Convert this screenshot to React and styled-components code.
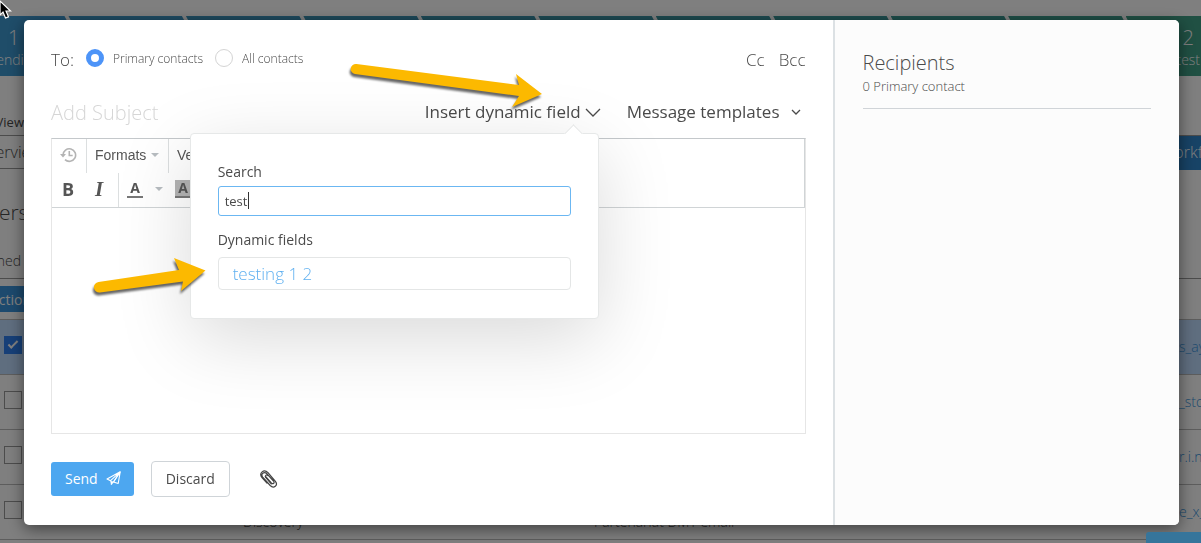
import React, { useState } from 'react';
import styled, { createGlobalStyle } from 'styled-components';

const GlobalStyle = createGlobalStyle`
  *, *::before, *::after {
    box-sizing: border-box;
  }

  body {
    margin: 0;
    overflow: hidden;
    background: #fff;
    color: #4a4a4a;
    font-family: 'Open Sans', 'Noto Sans', sans-serif;
    font-size: 14px;
  }

  button, input, textarea {
    font: inherit;
    color: inherit;
  }

  button {
    padding: 0;
    border: 0;
    background: none;
    cursor: pointer;
  }
`

/* ---------- page behind the dialog ---------- */

const Page = styled.div`
  height: 100vh;
  overflow: hidden;
  padding-top: 16px;
`

const Pipeline = styled.ol`
  display: grid;
  grid-template-columns: repeat(11, 1fr);
  margin: 0 -42px 0 -49px;
  padding: 0;
  list-style: none;
`

const Stage = styled.li`
  display: flex;
  flex-direction: column;
  align-items: center;
  height: 60px;
  margin-right: -12px;
  padding: 9px 4px 0 0;
  background: ${props => props.$color};
  clip-path: polygon(0 0, calc(100% - 16px) 0, 100% 50%, calc(100% - 16px) 100%, 0 100%, 16px 50%);
  color: #fff;
  font-weight: 300;
  line-height: 18px;
`

const StageCount = styled.span`
  font-size: 20px;
  line-height: 26px;
`

const Content = styled.div`
  margin-left: -26px;
`

const ViewLabel = styled.div`
  height: 60px;
  padding-top: 37px;
  border-bottom: 1px solid #999;
  font-size: 13px;
  line-height: 18px;
`

const Tabs = styled.div`
  display: flex;
  justify-content: space-between;
  align-items: center;
  height: 33px;
  padding-left: 2px;
  border-bottom: 1px solid #999;
  font-size: 16px;
  font-weight: 300;
`

const Workflow = styled.button`
  align-self: flex-start;
  height: 34px;
  margin-right: -46px;
  padding: 0 20px 2px;
  background: #2f86cc;
  color: #fff;
  font-size: 16px;
`

const ListTitle = styled.h2`
  margin: 0;
  padding: 25px 0 31px;
  font-size: 21px;
  font-weight: 300;
  line-height: 36px;
`

const ColumnHead = styled.div`
  height: 18px;
  padding-left: 2px;
  line-height: 0;
  border-bottom: 1px solid #999;
  font-weight: 300;
`

const Actions = styled.div`
  height: 41px;
  padding-top: 7px;
  border-bottom: 1px solid #bbb;
`

const ActionButton = styled.button`
  height: 26px;
  padding: 0 16px;
  background: #3a94dc;
  color: #fff;
`

const Row = styled.div`
  display: grid;
  grid-template-columns: 239px 351px 1fr auto;
  align-items: center;
  height: 55px;
  margin-right: -60px;
  padding: 0 0 2px 30px;
  border-bottom: 1px solid #bbb;
  background: ${props => props.$selected ? '#bfdcff' : 'transparent'};
`

const RowCheck = styled.input`
  appearance: none;
  display: grid;
  place-items: center;
  width: 18px;
  height: 18px;
  margin: 0 0 2px;
  border: 1px solid #999;

  &:checked {
    border-color: #2d7ff0;
    background: #2d7ff0;
  }

  &:checked::after {
    content: '';
    width: 10px;
    height: 5px;
    margin-bottom: 3px;
    border: solid #fff;
    border-width: 0 0 2px 2px;
    transform: rotate(-45deg);
  }
`

const RowText = styled.span`
  align-self: end;
  padding-bottom: 6px;
  font-weight: 300;
  line-height: 18px;
`

const RowLink = styled.a`
  width: 82px;
  color: #3a94dc;
  text-decoration: none;
  font-weight: 300;
`

const ChatTab = styled.div`
  position: fixed;
  z-index: 1;
  right: 0;
  bottom: 0;
  width: 55px;
  height: 11px;
  border-radius: 3px 0 0 0;
  background: #36759b;
`

/* ---------- dialog ---------- */

const Overlay = styled.div`
  position: fixed;
  inset: 0;
  display: flex;
  padding: 20px 22px 18px 24px;
  background: rgba(0, 0, 0, .5);
`

const Dialog = styled.div`
  display: flex;
  flex: 1;
  border-radius: 5px;
  background: #fff;
  box-shadow: 0 4px 16px rgba(0, 0, 0, .5);
`

const Compose = styled.form`
  display: flex;
  flex: 1;
  flex-direction: column;
  min-width: 0;
  padding: 26px 27px 28px;
`

const Sidebar = styled.aside`
  width: 30%;
  padding: 28px;
  border-left: 2px solid #dce1e4;
  border-radius: 0 5px 5px 0;
  background: #fcfcfc;
`

const SidebarTitle = styled.h1`
  margin: 0;
  font-size: 20px;
  font-weight: 300;
  line-height: 29px;
`

const SidebarCount = styled.p`
  margin: 0;
  padding-bottom: 13px;
  border-bottom: 1px solid #d0d4d8;
  font-size: 13px;
  font-weight: 300;
  line-height: 18px;
`

const ToRow = styled.div`
  display: flex;
  align-items: center;
  height: 26px;
  font-size: 17px;
  font-weight: 300;
`

const RadioLabel = styled.label`
  display: flex;
  align-items: center;
  gap: 9px;
  margin: 0 0 2px 12px;
  font-size: 12px;
`

const Radio = styled.input`
  appearance: none;
  width: 18px;
  height: 18px;
  margin: 0;
  border: 1px solid #d4d4d4;
  border-radius: 50%;

  &:checked {
    border: 5px solid #4d94f8;
  }
`

const CopyButtons = styled.div`
  display: flex;
  gap: 14px;
  margin-left: auto;
`

const CopyButton = styled.button`
  font-weight: 300;
`

const SubjectRow = styled.div`
  display: flex;
  align-items: center;
  height: 30px;
  margin: 25px 0 11px;
`

const Subject = styled.input`
  flex: 1;
  min-width: 0;
  padding: 0;
  border: 0;
  outline: 0;
  background: none;
  font-size: 20px;
  font-weight: 300;

  &::placeholder {
    color: #d6d6d6;
    opacity: 1;
  }
`

const Dropdown = styled.div`
  position: relative;
  margin-left: 26px;
`

const DropdownButton = styled.button`
  display: flex;
  align-items: center;
  gap: ${props => props.$gap};
  padding-right: ${props => props.$inset || 0};
  font-size: 17px;
  line-height: 30px;
`

const Popover = styled.div`
  position: absolute;
  z-index: 2;
  top: 36px;
  right: 2px;
  width: 409px;
  padding: 28px 27px;
  border: 1px solid #e6e8e8;
  border-radius: 4px;
  background: #fff;
  box-shadow: 0 20px 76px rgba(0, 0, 0, .15);

  &::before {
    content: '';
    position: absolute;
    top: -7px;
    right: 18px;
    width: 13px;
    height: 13px;
    border: solid #e6e8e8;
    border-width: 1px 0 0 1px;
    background: #fff;
    transform: rotate(45deg);
  }
`

const FieldLabel = styled.label`
  display: block;
  line-height: 20px;
`

const SearchBox = styled.div`
  position: relative;
  margin: 4px 0 14px;
`

const SearchInput = styled.input`
  display: block;
  width: 100%;
  height: 30px;
  padding: 0 6px;
  border: 1px solid #6bb7f2;
  border-radius: 3px;
  outline: 0;
  font-size: 13px;
`

const Caret = styled.span`
  position: absolute;
  top: 6px;
  left: 30px;
  width: 1px;
  height: 17px;
  background: #333;
`

const FieldOption = styled.button`
  display: block;
  width: 100%;
  height: 33px;
  margin-top: 7px;
  padding: 0 14px;
  border: 1px solid #e4e6e6;
  border-radius: 4px;
  color: #5fb0f0;
  font-size: 17px;
  font-weight: 300;
  text-align: left;
`

const Editor = styled.div`
  display: flex;
  flex: 1;
  flex-direction: column;
  border: 1px solid #e6e6e6;
  border-top-color: #c4c8cb;
`

const Toolbar = styled.div`
  border-right: 1px solid #d0d4d6;
  border-bottom: 1px solid #d0d4d6;
  color: #555;
  font-family: 'Liberation Sans', Arial, sans-serif;
`

const ToolbarRow = styled.div`
  display: flex;
  height: 34px;
`

const ToolGroup = styled.div`
  display: flex;
  align-items: center;
  gap: ${props => props.$gap || 0};
  width: ${props => props.$width};
  padding: 0 0 2px 8px;
  border-right: 1px solid #dcdfe0;
`

const Tool = styled.button`
  display: flex;
  align-items: center;
  gap: 5px;
`

const Bold = styled.b`
  padding-left: 2px;
  font: 700 18px/20px 'Open Sans', sans-serif;
`

const Italic = styled.i`
  font: italic 700 21px/20px 'Liberation Serif', serif;
`

const ColorLetter = styled.span`
  width: 16px;
  border-bottom: 2px solid #777;
  background: ${props => props.$fill || 'none'};
  font: 700 14px/16px 'Open Sans', sans-serif;
`

const Triangle = styled.span`
  border: 4px solid transparent;
  border-top: 4px solid #b8bdc1;
  border-bottom: 0;
`

const Message = styled.textarea`
  flex: 1;
  width: 100%;
  padding: 12px;
  border: 0;
  outline: 0;
  background: none;
  resize: none;
`

const Footer = styled.div`
  display: flex;
  align-items: center;
  margin-top: 27px;
`

const Send = styled.button`
  display: flex;
  align-items: center;
  gap: 8px;
  height: 34px;
  padding: 0 13px 2px 14px;
  border-radius: 3px;
  background: #4da7f0;
  color: #fff;
`

const Discard = styled.button`
  height: 36px;
  margin: 0 30px 0 17px;
  padding: 0 14px 2px;
  border: 1px solid #cfd4d8;
  border-radius: 4px;
`

const Annotations = styled.svg`
  position: fixed;
  z-index: 5;
  top: 0;
  left: 0;
  pointer-events: none;
  filter: drop-shadow(-1px 3px 1px rgba(0, 0, 0, .6));
`

const Pointer = styled.svg`
  position: fixed;
  z-index: 5;
  top: 0;
  left: 0;
`

const Chevron = ({ width, height }) => (
  <svg width={ width } height={ height } viewBox={ `0 0 ${width} ${height}` } fill="none" stroke="#4a4a4a" strokeWidth="1.3">
    <path d={ `M1 1 L${width / 2} ${height - 1} L${width - 1} 1` } />
  </svg>
)

const HistoryIcon = () => (
  <svg width="17" height="16" viewBox="0 0 17 16" fill="none" stroke="#b4b4b4" strokeWidth="1.6">
    <path d="M3 8a6.3 6.3 0 1 1 2 4.7M9.3 4v4.500h3.400" />
    <path d="M0 7h6L3 10.500z" fill="#b4b4b4" stroke="none" />
  </svg>
)

const PlaneIcon = () => (
  <svg width="15" height="15" viewBox="0 0 15 15" fill="none" stroke="#fff" strokeWidth="1.1" strokeLinejoin="round">
    <path d="M14.200.8 1 8l3.500 1.700L14.200.8 12.200 12.500 7.500 11z" />
    <path d="M4.500 9.700 5.300 14l2.200-3z" fill="#fff" strokeWidth=".5" />
    <path d="M7.500 11 14.200.8" />
  </svg>
)

const ClipIcon = () => (
  <svg width="18" height="20" viewBox="0 0 18 20" fill="none" stroke="#444" strokeWidth="1.2" strokeLinecap="round">
    <path d="M5.500 7.500 11.300 14c1.800 1.700 3.700-.1 2.200-2L7 4.800C4 1.900.200 5 2.700 8.100l7.500 8.400c3.600 3.600 8.200-.3 5.200-4.200L8 3.700C3.800-.500-1.500 4.200 2 8.500l5 5.600" />
    <path d="M8 6.500c-1.600-1.300-3.500.3-2.300 2l5.600 6.300" />
  </svg>
)

const stageColors = [
  '#3e9ad3', '#3c96c6', '#3b94bd', '#3a92b4', '#3a93ac', '#3a94a6',
  '#3a959f', '#3a9698', '#3a9892', '#3c9c8c', '#40a087',
]

const rows = [
  { link: 's_ayoub', selected: true },
  { link: '_stone' },
  { link: 'r.i.nash' },
  { link: 'e_x_li', stage: 'Discovery', name: 'Partenariat DMT email' },
]

const Background = () => (
  <Page>
    <Pipeline>
      { stageColors.map((color, i) => (
        <Stage key={ color } $color={ color }>
          { i === 0 && <><StageCount>1</StageCount>Pending</> }
          { i === 10 && <><StageCount>2</StageCount>test</> }
        </Stage>
      )) }
    </Pipeline>
    <Content>
      <ViewLabel>My View</ViewLabel>
      <Tabs>
        <span>Overview</span>
        <Workflow type="button">Workflow</Workflow>
      </Tabs>
      <ListTitle>Users:</ListTitle>
      <ColumnHead>Owned</ColumnHead>
      <Actions><ActionButton type="button">Action</ActionButton></Actions>
      { rows.map(row => (
        <Row key={ row.link } $selected={ row.selected }>
          <RowCheck type="checkbox" aria-label={ row.link } defaultChecked={ row.selected } />
          <RowText>{ row.stage }</RowText>
          <RowText>{ row.name }</RowText>
          <RowLink href="#contact">{ row.link }</RowLink>
        </Row>
      )) }
    </Content>
    <ChatTab />
  </Page>
)

const DynamicFields = () => {
  const [search, setSearch] = useState('test');
  return (
    <Popover>
      <FieldLabel htmlFor="field-search">Search</FieldLabel>
      <SearchBox>
        <SearchInput id="field-search" value={ search } onChange={ e => setSearch(e.target.value) } />
        <Caret />
      </SearchBox>
      <FieldLabel as="div">Dynamic fields</FieldLabel>
      <FieldOption type="button">testing 1 2</FieldOption>
    </Popover>
  )
}

const EditorToolbar = () => (
  <Toolbar>
    <ToolbarRow>
      <ToolGroup $width="35px">
        <Tool type="button" aria-label="History"><HistoryIcon /></Tool>
      </ToolGroup>
      <ToolGroup $width="82px">
        <Tool type="button">Formats <Triangle /></Tool>
      </ToolGroup>
      <ToolGroup $width="92px">
        <Tool type="button">Verdana <Triangle /></Tool>
      </ToolGroup>
    </ToolbarRow>
    <ToolbarRow>
      <ToolGroup $width="67px" $gap="21px">
        <Tool type="button"><Bold>B</Bold></Tool>
        <Tool type="button"><Italic>I</Italic></Tool>
      </ToolGroup>
      <ToolGroup $width="100px" $gap="12px">
        <Tool type="button"><ColorLetter>A</ColorLetter></Tool>
        <Triangle />
        <Tool type="button"><ColorLetter $fill="#b4b4b4">A</ColorLetter></Tool>
      </ToolGroup>
    </ToolbarRow>
  </Toolbar>
)

const ComposeForm = () => (
  <Compose onSubmit={ e => e.preventDefault() }>
    <ToRow>
      <span>To:</span>
      <RadioLabel><Radio type="radio" name="to" defaultChecked />Primary contacts</RadioLabel>
      <RadioLabel><Radio type="radio" name="to" />All contacts</RadioLabel>
      <CopyButtons>
        <CopyButton type="button">Cc</CopyButton>
        <CopyButton type="button">Bcc</CopyButton>
      </CopyButtons>
    </ToRow>
    <SubjectRow>
      <Subject placeholder="Add Subject" aria-label="Subject" />
      <Dropdown>
        <DropdownButton type="button" $gap="4px">
          Insert dynamic field <Chevron width={ 16 } height={ 9 } />
        </DropdownButton>
        <DynamicFields />
      </Dropdown>
      <Dropdown>
        <DropdownButton type="button" $gap="11px" $inset="5px">
          Message templates <Chevron width={ 10 } height={ 6 } />
        </DropdownButton>
      </Dropdown>
    </SubjectRow>
    <Editor>
      <EditorToolbar />
      <Message aria-label="Message" />
    </Editor>
    <Footer>
      <Send type="submit">Send <PlaneIcon /></Send>
      <Discard type="button">Discard</Discard>
      <Tool type="button" aria-label="Attach a file"><ClipIcon /></Tool>
    </Footer>
  </Compose>
)

const App = () => (
  <>
    <GlobalStyle />
    <Background />
    <Overlay>
      <Dialog role="dialog" aria-label="New message">
        <ComposeForm />
        <Sidebar>
          <SidebarTitle>Recipients</SidebarTitle>
          <SidebarCount>0 Primary contact</SidebarCount>
        </Sidebar>
      </Dialog>
    </Overlay>
    <Annotations width="620" height="320" viewBox="-1 0 620 320" fill="#fcb900">
      <path d="M355.500 64 518 85l-3-11 26 20-30 13 7-11L354 74a5 5 0 0 1 1.500-10z" />
      <path d="M97.500 282 178 270l-5-12 31.500 12.500L180 291l2-9.500L99 292.500a5.300 5.300 0 0 1-1.500-10.500z" />
    </Annotations>
    <Pointer width="12" height="20" viewBox="0 0 12 20">
      <path d="M0 1v14l3-3 2.500 6 3-1.200L6 11h4.500z" fill="#000" stroke="#fff" strokeWidth="1.2" />
    </Pointer>
  </>
)

export default App;
